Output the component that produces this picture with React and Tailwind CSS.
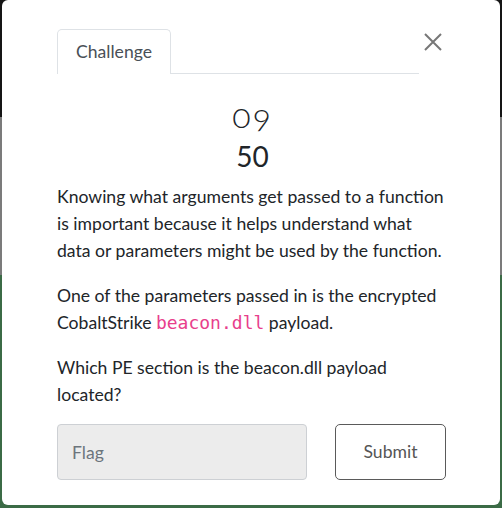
import React from 'react';

const App = () => {
    return (
        <div className="relative w-[502px] h-[508px] overflow-hidden" style={{ fontFamily: 'Lato, "Open Sans", sans-serif' }}>
            {/* page behind the modal */}
            <div className="flex flex-col h-full">
                <div className="h-[117px] bg-[#151515]"></div>
                <div className="h-[158px] bg-[#7b7b7b]"></div>
                <div className="flex-1 bg-[#3b6b46]"></div>
            </div>

            {/* modal */}
            <div className="absolute left-[2px] right-[2px] top-0 h-[505px] bg-white rounded-[6px] pl-[55px] pr-[52px] pt-[29px] text-[#212529]">
                <div className="flex items-start">
                    <div className="w-[362px] flex border-b border-[#dee2e6]">
                        <div className="h-[45px] px-[18px] flex items-center border border-b-0 border-[#dee2e6] rounded-t-[5px] bg-white -mb-px text-[17.6px] text-[#495057]">
                            Challenge
                        </div>
                    </div>
                    <button className="ml-[3px] mt-[2px] w-[22px] h-[22px] flex items-center justify-center text-[#777]">
                        <svg width="20" height="20" viewBox="0 0 20 20" fill="none" stroke="currentColor" strokeWidth="2">
                            <path d="M2 2 L18 18 M18 2 L2 18" />
                        </svg>
                    </button>
                </div>

                <div className="flex flex-col items-center mt-[24px]">
                    <div className="text-[34px] leading-[34px] font-light oldstyle-nums tracking-[2px]">09</div>
                    <div className="text-[28px] leading-[36px] mt-[6px]">50</div>
                </div>

                <div className="mt-[9px] text-[17.6px] leading-[27px] w-[392px]">
                    <p>Knowing what arguments get passed to a function is important because it helps understand what data or parameters might be used by the function.</p>
                    <p className="mt-[18px]">
                        One of the parameters passed in is the encrypted CobaltStrike{' '}
                        <code className="text-[#e83e8c] text-[18px] leading-[20px]" style={{ fontFamily: '"DejaVu Sans Mono", monospace' }}>beacon.dll</code> payload.
                    </p>
                    <p className="mt-[18px]">Which PE section is the beacon.dll payload located?</p>
                </div>

                <div className="flex items-center mt-[16px]">
                    <input
                        placeholder="Flag"
                        className="w-[250px] h-[56px] bg-[#ececec] border border-[#cdd0d4] rounded-[4px] px-[14px] text-[17.6px] placeholder-[#6c757d] outline-none"
                    />
                    <button className="ml-[28px] w-[111px] h-[56px] border border-[#5a5a5a] rounded-[5px] text-[17.6px] text-[#555]">
                        Submit
                    </button>
                </div>
            </div>
        </div>
    );
};

export default App;
